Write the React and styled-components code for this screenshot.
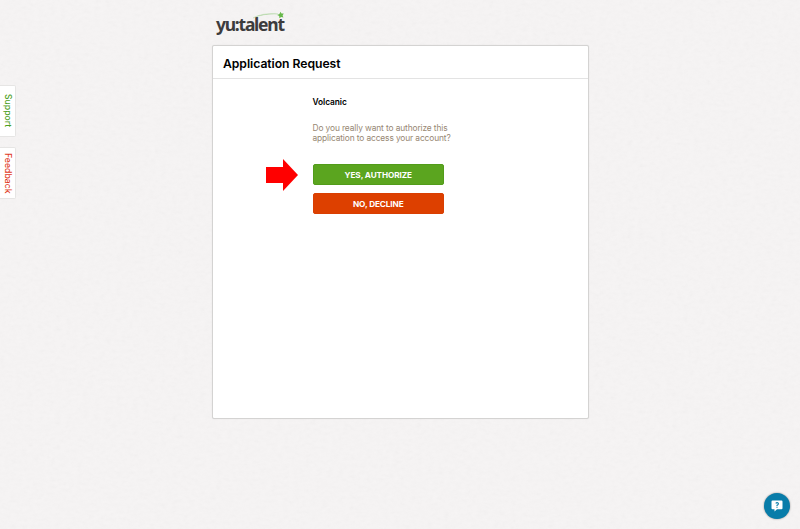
import React from "react";
import styled, { createGlobalStyle } from "styled-components";

const GlobalStyle = createGlobalStyle`
  * { box-sizing: border-box; }
  html, body { margin: 0; height: 100%; overflow: hidden; background: #f6f4f4; }
  body { font-family: Inter, "Liberation Sans", sans-serif; color: #111; }
`;

const Page = styled.div`
  position: relative;
  height: 529px;
  display: flex;
  justify-content: center;
  overflow: hidden;
`;

const PaperTexture = styled.svg`
  position: absolute;
  inset: 0;
  width: 100%;
  height: 100%;
  opacity: 0.05;
`;

const Main = styled.main`
  position: relative;
  width: 377px;
  margin-left: 1px;
  padding-top: 11px;
`;

const Brand = styled.header`
  position: relative;
  height: 34px;
  padding-left: 4px;
  color: #3d3c3d;
  font: 700 17.5px/26px "Noto Sans", sans-serif;
  letter-spacing: -1.25px;
  white-space: nowrap;
`;

const BrandSwoosh = styled.svg`
  position: absolute;
  left: 37px;
  top: 0;
  width: 36px;
  height: 12px;
`;

const Card = styled.section`
  height: 374px;
  background: #fff;
  border: 1px solid #d4d3d2;
  border-radius: 2px;
  box-shadow: 0 0 1px #d8d8d8;
`;

const CardTitle = styled.h1`
  height: 33px;
  margin: 0;
  padding-left: 10px;
  border-bottom: 1px solid #e3e3e3;
  font-size: 12.2px;
  line-height: 36px;
  font-weight: 600;
  letter-spacing: -0.05px;
  color: #000;
`;

const Request = styled.div`
  display: flex;
  flex-direction: column;
  width: 150px;
  margin-left: 99.5px;
  padding-top: 17px;
`;

const AppName = styled.h2`
  margin: 0;
  font-size: 8.4px;
  line-height: 12px;
  font-weight: 600;
  letter-spacing: -0.08px;
  color: #000;
`;

const Question = styled.p`
  margin: 15px 0 0;
  font-size: 8.4px;
  line-height: 10px;
  letter-spacing: -0.12px;
  color: #978773;
  white-space: nowrap;
`;

const Actions = styled.div`
  position: relative;
  display: grid;
  gap: 8px;
  width: 131.5px;
  margin-top: 21px;
`;

const ActionButton = styled.button`
  height: 21px;
  padding: 0;
  border: 1px solid ${(p) => (p.$decline ? "#d93f02" : "#529c1a")};
  border-radius: 2px;
  background: ${(p) => (p.$decline ? "#dd4000" : "#5ba51f")};
  color: #fff;
  font: 700 8.2px/20px Inter, sans-serif;
  letter-spacing: -0.1px;
`;

const Pointer = styled.svg`
  position: absolute;
  left: -46.5px;
  top: -5px;
  width: 33px;
  height: 32px;
`;

const SideTabs = styled.nav`
  position: absolute;
  left: 0;
  top: 85px;
  display: grid;
  gap: 10px;
`;

const SideTab = styled.a`
  display: flex;
  align-items: center;
  justify-content: center;
  width: 16px;
  height: 52px;
  border: 1px solid #e6e5e4;
  border-left: 0;
  border-radius: 0 2px 2px 0;
  background: #fff;
  writing-mode: vertical-rl;
  font-size: 8.7px;
  line-height: 14px;
  font-weight: 500;
  color: ${(p) => (p.$alert ? "#df3b24" : "#4ca022")};
`;

const HelpButton = styled.button`
  position: absolute;
  left: 764px;
  top: 493px;
  display: grid;
  place-items: center;
  width: 26px;
  height: 26px;
  padding: 0;
  border: 0;
  border-radius: 50%;
  background: #087ca9;
  box-shadow: 0 0 2px rgba(0, 0, 0, 0.45);
`;

export default function App() {
  return (
    <>
      <GlobalStyle />
      <Page>
        <PaperTexture aria-hidden="true">
          <filter id="paper">
            <feTurbulence type="fractalNoise" baseFrequency="0.18 0.28" numOctaves="3" seed="4" />
            <feColorMatrix type="saturate" values="0" />
          </filter>
          <rect width="100%" height="100%" filter="url(#paper)" />
        </PaperTexture>
        <Main>
          <Brand>
            yu:talent
            <BrandSwoosh viewBox="0 0 36 12" aria-hidden="true">
              <path d="M4 7C11 3 19 2 29 3C19 2.5 11 4 4 7Z" fill="#9dcd8e" stroke="#b5d9aa" strokeWidth=".4" />
              <path d="m31.5.8 1 1.8 2.3-.1-1.2 1.9.8 2-2.2-.5-1.8 1.3-.2-2.2-2-1.1 2.2-.9Z" fill="#67b84b" />
            </BrandSwoosh>
          </Brand>
          <Card>
            <CardTitle>Application Request</CardTitle>
            <Request>
              <AppName>Volcanic</AppName>
              <Question>
                Do you really want to authorize this<br />
                application to access your account?
              </Question>
              <Actions>
                <Pointer viewBox="0 0 33 32" aria-hidden="true">
                  <path d="M0 8H17V0L32 16 17 32V24H0Z" fill="#f00" />
                </Pointer>
                <ActionButton>YES, AUTHORIZE</ActionButton>
                <ActionButton $decline>NO, DECLINE</ActionButton>
              </Actions>
            </Request>
          </Card>
        </Main>
        <SideTabs>
          <SideTab>Support</SideTab>
          <SideTab $alert>Feedback</SideTab>
        </SideTabs>
        <HelpButton aria-label="Help">
          <svg width="12" height="12" viewBox="0 0 12 12" aria-hidden="true">
            <path d="M1.5.5h9q1 0 1 1v6.8q0 1-1 1H6L3.5 11.5V9.3h-2q-1 0-1-1V1.5q0-1 1-1Z" fill="#fff" />
            <path d="M4.7 3.3Q6 2.1 7.2 3.1 7.9 4.3 6 5.3V6" fill="none" stroke="#087ca9" strokeWidth="1.1" />
            <path d="M5.4 6.8h1.2v1H5.4Z" fill="#087ca9" />
          </svg>
        </HelpButton>
      </Page>
    </>
  );
}
